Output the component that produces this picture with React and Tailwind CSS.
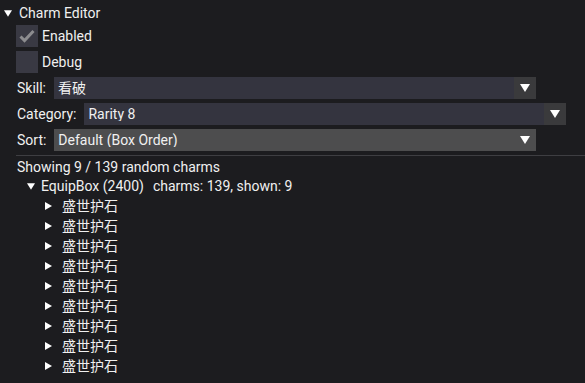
import React from "react";

const items = Array.from({ length: 9 }, () => "盛世护石");

function DownTri({ className = "" }) {
  return (
    <svg width="10" height="8" viewBox="0 0 10 8" className={className}>
      <path d="M0 0 L10 0 L5 8 Z" fill="#ffffff" />
    </svg>
  );
}

function RightTri() {
  return (
    <svg width="7" height="8" viewBox="0 0 7 8">
      <path d="M0 0 L7 4 L0 8 Z" fill="#ffffff" />
    </svg>
  );
}

function Checkbox({ checked, label }) {
  return (
    <div className="flex items-center gap-1 pl-4 h-[22px]">
      <div className="w-[22px] h-[22px] bg-[#393943] flex items-center justify-center">
        {checked && (
          <svg width="16" height="14" viewBox="0 0 16 14">
            <path
              d="M1.5 7.5 L5.5 11.5 L14.5 2"
              stroke="#8c8c8f"
              strokeWidth="3"
              fill="none"
            />
          </svg>
        )}
      </div>
      <span>{label}</span>
    </div>
  );
}

function Combo({ label, value, active }) {
  return (
    <div className="flex items-center gap-2 pl-[17px] h-[22px]">
      <span>{label}</span>
      <div
        className={
          "w-[482px] h-[22px] flex items-center " +
          (active ? "bg-[#4d4d4e]" : "bg-[#34343f]")
        }
      >
        <span className="flex-1 pl-1 truncate">{value}</span>
        <div
          className={
            "w-[22px] h-[22px] flex items-center justify-center " +
            (active ? "bg-[#4d4d4e]" : "bg-[#3a3a3c]")
          }
        >
          <DownTri />
        </div>
      </div>
    </div>
  );
}

export default function App() {
  return (
    <div
      className="w-[585px] h-[383px] overflow-hidden bg-[#1c1c1f] text-[#f0f0f0] text-[14px] leading-none"
      style={{ fontFamily: 'Roboto, "Noto Sans CJK SC", sans-serif' }}
    >
      <div className="flex flex-col pt-1">
        {/* Header */}
        <div className="flex items-center h-[18px] pl-1 gap-[7px]">
          <DownTri className="w-[8px] h-[7px]" />
          <span>Charm Editor</span>
        </div>

        <div className="flex flex-col gap-1 mt-[3px]">
          <Checkbox checked label="Enabled" />
          <Checkbox label="Debug" />
          <Combo label="Skill:" value="看破" />
          <Combo label="Category:" value="Rarity 8" />
          <Combo label="Sort:" value="Default (Box Order)" active />
        </div>

        <div className="mt-1 ml-4 h-px bg-[#3e3e42]" />

        <div className="flex flex-col">
          <div className="h-5 flex items-center pl-[17px] pt-px">
            Showing 9 / 139 random charms
          </div>
          <div className="h-5 flex items-center pl-[27px] gap-[6px]">
            <DownTri className="w-[8px] h-[7px]" />
            <span>EquipBox (2400)</span>
            <span className="ml-[3px]">charms: 139, shown: 9</span>
          </div>
          {items.map((name, i) => (
            <div key={i} className="h-5 flex items-center pl-[45px] gap-[10px]">
              <RightTri />
              <span>{name}</span>
            </div>
          ))}
        </div>
      </div>
    </div>
  );
}
